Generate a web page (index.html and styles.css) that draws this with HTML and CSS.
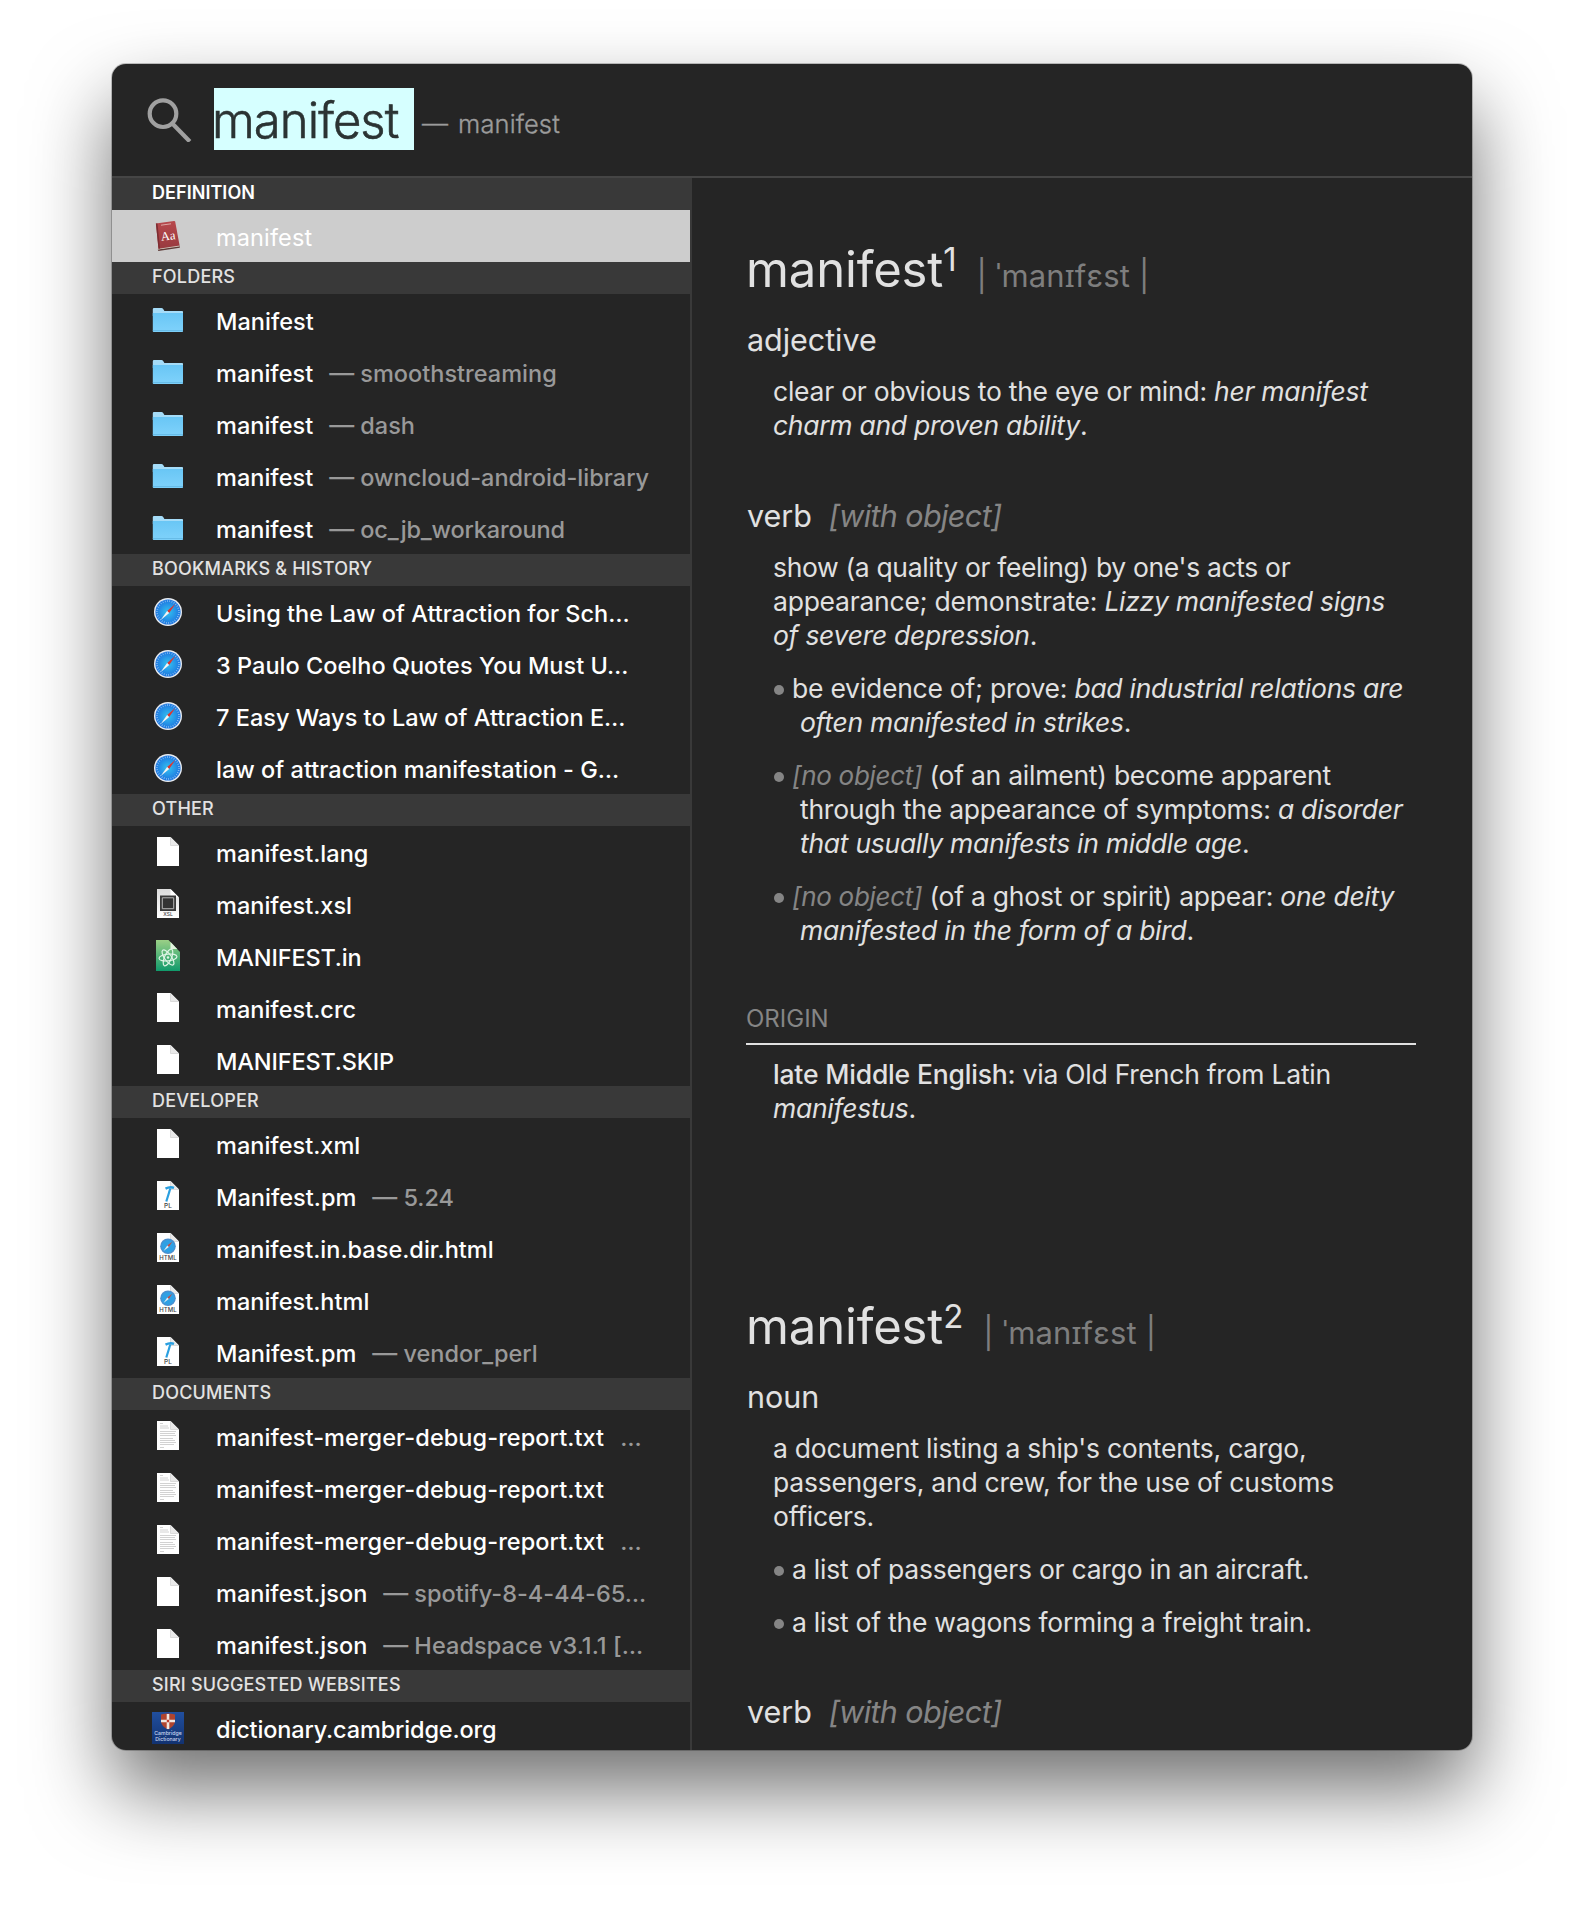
FILE: index.html
```html
<!DOCTYPE html>
<html lang="en">
<head>
<meta charset="utf-8">
<title>Spotlight – manifest</title>
<link rel="stylesheet" href="styles.css">
</head>
<body>
<svg class="sprite" width="0" height="0" aria-hidden="true">
  <defs>
    <linearGradient id="g-folder" x1="0" y1="0" x2="0" y2="1"><stop offset="0" stop-color="#69c6f5"/><stop offset="1" stop-color="#7fd2fb"/></linearGradient>
    <radialGradient id="g-compass"><stop offset="0" stop-color="#34c3f0"/><stop offset="1" stop-color="#1d74e0"/></radialGradient>
    <linearGradient id="g-atom" x1="0" y1="0" x2="0" y2="1"><stop offset="0" stop-color="#9bcf86"/><stop offset="1" stop-color="#109a6b"/></linearGradient>
    <linearGradient id="g-book" x1="0" y1="0" x2="0" y2="1"><stop offset="0" stop-color="#b8484c"/><stop offset="1" stop-color="#983a3f"/></linearGradient>
    <linearGradient id="g-cam" x1="0" y1="0" x2="0" y2="1"><stop offset="0" stop-color="#214f9f"/><stop offset="1" stop-color="#123270"/></linearGradient>
    <linearGradient id="g-xsl" x1="0" y1="0" x2="0" y2="1"><stop offset="0" stop-color="#dcdcdc"/><stop offset="1" stop-color="#ffffff"/></linearGradient>
  </defs>
  <symbol id="i-folder" viewBox="0 0 32 32">
    <path d="M.8 5.2Q.8 4 2 4H9.500Q10.500 4 11.200 5L12.400 7H30.200Q31 7 31 7.800V12H.8z" fill="#a5dcf8"/>
    <path d="M.8 9H31V27.200Q31 28 30.200 28H1.600Q.8 28 .8 27.200z" fill="url(#g-folder)"/>
    <path d="M.8 26.600H31" stroke="#5fb4e0" stroke-width=".8"/>
  </symbol>
  <symbol id="i-compass" viewBox="0 0 32 32">
    <circle cx="16" cy="16" r="14" fill="#e9edf2"/>
    <circle cx="16" cy="16" r="12.600" fill="url(#g-compass)"/>
    <circle cx="16" cy="16" r="11" fill="none" stroke="#bfe2fb" stroke-width="1.800" stroke-dasharray=".7 1.600" opacity=".75"/>
    <path d="M23.500 7.800L17.200 16.900 15.100 15z" fill="#e0352f"/>
    <path d="M8.500 24.200L15.100 15 17.200 16.900z" fill="#f4f4f4"/>
  </symbol>
  <symbol id="i-file" viewBox="0 0 32 32">
    <path d="M5 1H18.500L27 9.500V30H5z" fill="#fff"/>
    <path d="M18.500 1V9.500H27z" fill="#e9e9e9"/>
    <path d="M18.500 1V9.500H27" fill="none" stroke="#cfcfcf" stroke-width=".7"/>
  </symbol>
  <symbol id="i-text" viewBox="0 0 32 32">
    <use href="#i-file"/>
    <path d="M8 3.500h3M8 6h8M8 8h9M8 11.500h16M8 13.500h15M8 15.500h16M8 18.500h13M8 20.500h15M8 22.500h16M8 24.500h14M8 27.500h4" stroke="#cdcdcd" stroke-width=".9" fill="none"/>
  </symbol>
  <symbol id="i-xsl" viewBox="0 0 32 32">
    <path d="M5 1H18.500L27 9.500V30H5z" fill="url(#g-xsl)"/>
    <path d="M18.500 1V9.500H27z" fill="#fff"/>
    <path d="M8 7.500H24V23H8z" fill="#3a3a3a"/>
    <path d="M10.300 9.800H21.700V20.700H10.300z" fill="#333" stroke="#b5b5b5" stroke-width="1"/>
  </symbol>
  <symbol id="i-atom" viewBox="0 0 32 32">
    <path d="M4 0H16.500L28 12V31H4z" fill="url(#g-atom)"/>
    <path d="M18.500 2V9H25.200z" fill="#e2f3df"/>
    <g fill="none" stroke="#dff5e6" stroke-width="1.200">
      <ellipse cx="16" cy="17.500" rx="9" ry="3.400" transform="rotate(-6 16 17.500)"/>
      <ellipse cx="16" cy="17.500" rx="9" ry="3.400" transform="rotate(54 16 17.500)"/>
      <ellipse cx="16" cy="17.500" rx="9" ry="3.400" transform="rotate(114 16 17.500)"/>
    </g>
    <circle cx="16" cy="17.500" r="1.200" fill="#dff5e6"/>
  </symbol>
  <symbol id="i-perl" viewBox="0 0 32 32">
    <use href="#i-file"/>
    <path d="M18.300 8.500L14.300 21.500" stroke="#2a9fe0" stroke-width="2.200" fill="none"/>
    <path d="M13.500 8.600Q18 6.300 22 7.800" stroke="#2a9fe0" stroke-width="2.400" fill="none"/>
  </symbol>
  <symbol id="i-html" viewBox="0 0 32 32">
    <use href="#i-file"/>
    <circle cx="16" cy="14.300" r="7.800" fill="#4a8fcf"/>
    <circle cx="16" cy="14.300" r="6.400" fill="#2fa0e4"/>
    <path d="M20.500 9.500L16.800 15 15.300 13.600z" fill="#c94a40"/>
    <path d="M11.500 19.100L15.300 13.600 16.800 15z" fill="#e8eef3"/>
  </symbol>
  <symbol id="i-book" viewBox="0 0 32 32">
    <path d="M4.800 29.500L5.300 31 26.800 27.800 26.700 25.500z" fill="#5d3a36"/>
    <path d="M4.900 27.800L5.200 29.600 26.600 26.400 26.300 24.500z" fill="#cfc4b8"/>
    <path d="M2.900 3.600L21 .9Q22 .8 22.200 1.800L26.600 25.600 5.500 28.800z" fill="url(#g-book)"/>
    <path d="M2.900 3.600L4.500 3.400 7 28.600 5.500 28.800z" fill="#7d2d32"/>
    <path d="M8 5.200L18 3.800" stroke="#dda9a6" stroke-width="1"/>
  </symbol>
  <symbol id="i-cambridge" viewBox="0 0 32 32">
    <path d="M0 0H32V32H0z" fill="url(#g-cam)"/>
    <path d="M9 2.500Q16 .5 23 2.500V10Q22 15 16 17.500 10 15 9 10z" fill="#b0442f"/>
    <path d="M14.700 2H17.300V7.700H23V10.300H17.300V17H14.700V10.300H9V7.700H14.700z" fill="#f0e6e0"/>
    <path d="M14.800 7.800h2.400v2.400h-2.400z" fill="#c23b2c"/>
  </symbol>
</svg>

<main class="window">
  <header class="search">
    <svg class="glass" viewBox="0 0 46 46"><circle cx="17" cy="17.700" r="13.300"/><path d="M26.300 27.500L43.800 45.500"/></svg>
    <div class="query">manifest</div>
    <div class="hint"><span class="dash">—</span>manifest</div>
  </header>
  <div class="body">
    <nav class="results">
      <h2 class="group top">DEFINITION</h2>
      <div class="row selected"><svg class="icon book" viewBox="0 0 32 32"><use href="#i-book"/><text x="15.200" y="20" text-anchor="middle" transform="rotate(-6 15 18)" class="aa">Aa</text></svg><span class="name">manifest</span></div>

      <h2 class="group">FOLDERS</h2>
      <div class="row"><svg class="icon"><use href="#i-folder"/></svg><span class="name">Manifest</span></div>
      <div class="row"><svg class="icon"><use href="#i-folder"/></svg><span class="name">manifest</span><span class="from"><span class="dash">—</span>smoothstreaming</span></div>
      <div class="row"><svg class="icon"><use href="#i-folder"/></svg><span class="name">manifest</span><span class="from"><span class="dash">—</span>dash</span></div>
      <div class="row"><svg class="icon"><use href="#i-folder"/></svg><span class="name">manifest</span><span class="from"><span class="dash">—</span>owncloud-android-library</span></div>
      <div class="row"><svg class="icon"><use href="#i-folder"/></svg><span class="name">manifest</span><span class="from"><span class="dash">—</span><span class="snug">oc_jb_workaround</span></span></div>

      <h2 class="group">BOOKMARKS &amp; HISTORY</h2>
      <div class="row"><svg class="icon"><use href="#i-compass"/></svg><span class="name">Using the Law of Attraction for Sch…</span></div>
      <div class="row"><svg class="icon"><use href="#i-compass"/></svg><span class="name">3 Paulo Coelho Quotes You Must U…</span></div>
      <div class="row"><svg class="icon"><use href="#i-compass"/></svg><span class="name">7 Easy Ways to Law of Attraction E…</span></div>
      <div class="row"><svg class="icon"><use href="#i-compass"/></svg><span class="name">law of attraction manifestation - G…</span></div>

      <h2 class="group">OTHER</h2>
      <div class="row"><svg class="icon"><use href="#i-file"/></svg><span class="name">manifest.lang</span></div>
      <div class="row"><svg class="icon" viewBox="0 0 32 32"><use href="#i-xsl"/><text x="16" y="28" text-anchor="middle" class="tag tag-small">XSL</text></svg><span class="name">manifest.xsl</span></div>
      <div class="row"><svg class="icon"><use href="#i-atom"/></svg><span class="name snug">MANIFEST.in</span></div>
      <div class="row"><svg class="icon"><use href="#i-file"/></svg><span class="name">manifest.crc</span></div>
      <div class="row"><svg class="icon"><use href="#i-file"/></svg><span class="name snug">MANIFEST.SKIP</span></div>

      <h2 class="group">DEVELOPER</h2>
      <div class="row"><svg class="icon"><use href="#i-file"/></svg><span class="name">manifest.xml</span></div>
      <div class="row"><svg class="icon" viewBox="0 0 32 32"><use href="#i-perl"/><text x="16" y="28" text-anchor="middle" class="tag">PL</text></svg><span class="name">Manifest.pm</span><span class="from"><span class="dash">—</span>5.24</span></div>
      <div class="row"><svg class="icon" viewBox="0 0 32 32"><use href="#i-html"/><text x="16" y="28" text-anchor="middle" class="tag tag-html">HTML</text></svg><span class="name">manifest.in.base.dir.html</span></div>
      <div class="row"><svg class="icon" viewBox="0 0 32 32"><use href="#i-html"/><text x="16" y="28" text-anchor="middle" class="tag tag-html">HTML</text></svg><span class="name">manifest.html</span></div>
      <div class="row"><svg class="icon" viewBox="0 0 32 32"><use href="#i-perl"/><text x="16" y="28" text-anchor="middle" class="tag">PL</text></svg><span class="name">Manifest.pm</span><span class="from"><span class="dash">—</span>vendor_perl</span></div>

      <h2 class="group">DOCUMENTS</h2>
      <div class="row"><svg class="icon"><use href="#i-text"/></svg><span class="name wide">manifest-merger-debug-report.txt</span><span class="from more">…</span></div>
      <div class="row"><svg class="icon"><use href="#i-text"/></svg><span class="name wide">manifest-merger-debug-report.txt</span></div>
      <div class="row"><svg class="icon"><use href="#i-text"/></svg><span class="name wide">manifest-merger-debug-report.txt</span><span class="from more">…</span></div>
      <div class="row"><svg class="icon"><use href="#i-file"/></svg><span class="name">manifest.json</span><span class="from"><span class="dash">—</span>spotify-8-4-44-65…</span></div>
      <div class="row"><svg class="icon"><use href="#i-file"/></svg><span class="name">manifest.json</span><span class="from"><span class="dash">—</span><span class="wide">Headspace v3.1.1 […</span></span></div>

      <h2 class="group">SIRI SUGGESTED WEBSITES</h2>
      <div class="row last"><svg class="icon" viewBox="0 0 32 32"><use href="#i-cambridge"/><text x="16" y="23.300" text-anchor="middle" class="cam">Cambridge</text><text x="16" y="28.800" text-anchor="middle" class="cam">Dictionary</text></svg><span class="name snug">dictionary.cambridge.org</span></div>
    </nav>

    <article class="entry">
      <h1 class="headword">manifest<sup>1</sup><span class="phon">| ˈmanɪfɛst |</span></h1>
      <h3 class="pos">adjective</h3>
      <p class="sense">clear or obvious to the eye or mind: <i>her manifest<br>charm and proven ability</i>.</p>
      <h3 class="pos next">verb<i class="gram">[with object]</i></h3>
      <p class="sense"><span class="tight">show (a quality or feeling) by one's acts or</span><br>appearance; demonstrate: <i>Lizzy manifested signs<br>of severe depression</i>.</p>
      <p class="sub"><span class="dot"></span>be evidence of; prove: <i>bad industrial relations are<br>often manifested in strikes</i>.</p>
      <p class="sub"><span class="dot"></span><i class="note">[no object]</i> (of an ailment) become apparent<br>through the appearance of symptoms: <i>a disorder<br>that usually manifests in middle age</i>.</p>
      <p class="sub"><span class="dot"></span><i class="note">[no object]</i> (of a ghost or spirit) appear: <i>one deity<br>manifested in the form of a bird</i>.</p>
      <h4 class="origin">ORIGIN</h4>
      <p class="sense"><b>late Middle English:</b> via Old French from Latin<br><i>manifestus</i>.</p>

      <h1 class="headword second">manifest<sup>2</sup><span class="phon">| ˈmanɪfɛst |</span></h1>
      <h3 class="pos">noun</h3>
      <p class="sense">a document listing a ship's contents, cargo,<br>passengers, and crew, for the use of customs<br>officers.</p>
      <p class="sub"><span class="dot"></span>a list of passengers or cargo in an aircraft.</p>
      <p class="sub"><span class="dot"></span>a list of the wagons forming a freight train.</p>
      <h3 class="pos next">verb<i class="gram">[with object]</i></h3>
    </article>
  </div>
</main>
</body>
</html>
```
FILE: styles.css
```css
* { box-sizing: border-box; }

body {
  margin: 0;
  height: 1910px;
  padding: 64px 112px 0;
  background: #fff;
  font-family: Inter, "Noto Sans", sans-serif;
  overflow: hidden;
}

h1, h2, h3, h4, p { margin: 0; font-weight: 400; }

.sprite { display: block; height: 0; }

.window {
  width: 1360px;
  height: 1686px;
  display: flex;
  flex-direction: column;
  border-radius: 14px;
  overflow: hidden;
  background: #252525;
  box-shadow: 0 0 0 1px rgba(0, 0, 0, .22), 0 40px 80px rgba(0, 0, 0, .56);
}

/* Search field */
.search {
  flex: none;
  display: flex;
  height: 114px;
  padding: 24px 0 0 34px;
  border-bottom: 2px solid #454545;
}

.glass {
  width: 46px;
  height: 46px;
  margin-top: 8px;
  fill: none;
  stroke: #a0a0a0;
  stroke-width: 4.2;
}

.query {
  width: 200px;
  height: 62px;
  margin-left: 22px;
  background: #d6ffff;
  color: #2b3333;
  font-size: 49px;
  font-weight: 300;
  line-height: 66px;
  letter-spacing: -.95px;
  text-indent: -2px;
  -webkit-text-stroke: .6px #2b3333;
}

.hint {
  margin-left: 8px;
  color: #9b9b9b;
  font-size: 25.5px;
  font-weight: 300;
  line-height: 71px;
  letter-spacing: .1px;
  -webkit-text-stroke: .35px #9b9b9b;
}

.hint .dash { margin-right: 10px; font-size: 26px; line-height: 0; }

/* Result list */
.body { flex: 1; display: flex; min-height: 0; }

.results {
  flex: none;
  width: 580px;
  overflow: hidden;
  border-right: 2px solid #393939;
}

.group {
  height: 32px;
  padding-left: 40px;
  background: #393939;
  color: #e2e2e2;
  font-size: 18px;
  font-weight: 500;
  line-height: 30px;
  letter-spacing: .2px;
}

.group.top { color: #fff; font-weight: 600; letter-spacing: .05px; }

.row {
  display: flex;
  height: 52px;
  padding-left: 40px;
  color: #fff;
  font-size: 23.5px;
  font-weight: 500;
  line-height: 56px;
  letter-spacing: .02px;
  white-space: nowrap;
}

.row.last { height: 48px; }
.row.selected { background: #cdcdcd; font-weight: 400; letter-spacing: .15px; }

.snug { letter-spacing: -.15px; }
.wide { letter-spacing: .07px; }

.icon { flex: none; width: 32px; height: 32px; margin: 10px 32px 0 0; }
.icon.book { margin: 10px 31px 0 1px; }

.from { margin-left: 16px; color: #999; }
.from .dash { margin-right: 6px; font-size: 25px; line-height: 0; }

.tag { font: 500 6.5px Inter, sans-serif; fill: #444; letter-spacing: 0; }
.tag-html { font-size: 6px; }
.tag-small { font-size: 5px; }
.aa { font: 12.5px "Liberation Serif", serif; fill: #fff; letter-spacing: 0; }
.cam { font: 500 5.2px Inter, sans-serif; fill: #c9d6ee; letter-spacing: 0; }

/* Dictionary entry */
.entry {
  flex: 1;
  min-width: 0;
  padding: 61px 56px 0 54px;
  overflow: hidden;
  color: #e1e1e1;
  white-space: nowrap;
}

.headword {
  height: 60px;
  font-size: 49px;
  line-height: 61px;
  letter-spacing: -.15px;
}

.headword.second { margin-top: 171px; }

.headword sup {
  font-size: 33px;
  line-height: 0;
  vertical-align: 16px;
}

.phon {
  margin-left: 20px;
  color: #7e7e7e;
  font-size: 31px;
  line-height: 0;
  letter-spacing: .15px;
}

.pos {
  margin-top: 21px;
  font-size: 30.5px;
  line-height: 40px;
  letter-spacing: -.05px;
  text-indent: 1px;
}

.pos.next { margin-top: 54px; }

.gram {
  margin-left: 17px;
  color: #858585;
  letter-spacing: -.6px;
}

.sense, .sub {
  padding-left: 27px;
  font-size: 26.5px;
  line-height: 34px;
  letter-spacing: -.24px;
}

.sense { margin-top: 14px; }
.sense i, .sub i { letter-spacing: -.28px; }
.sense b { font-weight: 500; letter-spacing: -.18px; }
.sense .tight { letter-spacing: -.34px; }

.sub {
  margin-top: 19px;
  padding-left: 54px;
  text-indent: -27px;
}

.sub + .pos.next { margin-top: 53px; }

.dot {
  display: inline-block;
  width: 10px;
  height: 10px;
  margin: 0 8px 3px 1px;
  border-radius: 50%;
  background: #858585;
}

.sub .note { color: #858585; font-size: 26px; line-height: 0; letter-spacing: -.3px; }

.origin {
  margin-top: 56.5px;
  padding-bottom: 9px;
  border-bottom: 2px solid #e1e1e1;
  color: #858585;
  font-size: 24px;
  line-height: 30px;
}

.origin + .sense { margin-top: 12.5px; }
```
